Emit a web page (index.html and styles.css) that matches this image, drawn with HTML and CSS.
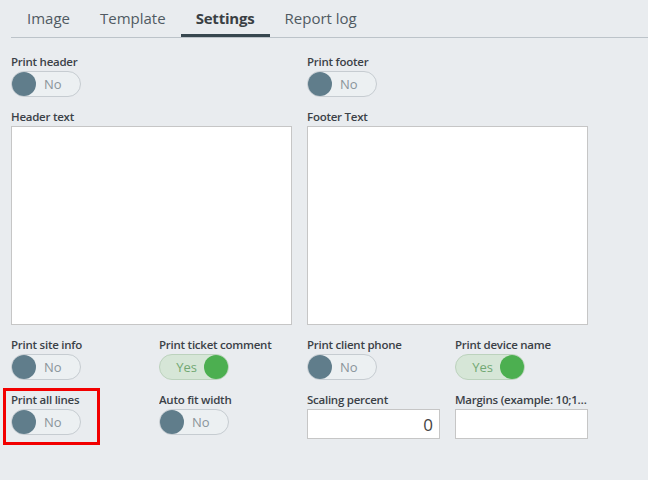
FILE: index.html
```html
<!DOCTYPE html>
<html lang="en">
<head>
    <meta charset="UTF-8">
    <title>Report settings</title>
    <link rel="stylesheet" href="styles.css">
</head>
<body>

    <!-- Tab strip -->
    <div class="tabs">
        <div class="tab">Image</div>
        <div class="tab">Template</div>
        <div class="tab active">Settings</div>
        <div class="tab">Report log</div>
    </div>

    <div class="settings">
        <!-- Row 1 -->
        <div class="field">
            <label>Print header</label>
            <div class="toggle"><span class="knob"></span><span class="state">No</span></div>
        </div>
        <div class="field"></div>
        <div class="field">
            <label>Print footer</label>
            <div class="toggle"><span class="knob"></span><span class="state">No</span></div>
        </div>
        <div class="field"></div>

        <!-- Row 2 -->
        <div class="field wide">
            <label>Header text</label>
            <textarea></textarea>
        </div>
        <div class="field wide">
            <label>Footer Text</label>
            <textarea></textarea>
        </div>

        <!-- Row 3 -->
        <div class="field">
            <label>Print site info</label>
            <div class="toggle"><span class="knob"></span><span class="state">No</span></div>
        </div>
        <div class="field">
            <label>Print ticket comment</label>
            <div class="toggle on"><span class="knob"></span><span class="state">Yes</span></div>
        </div>
        <div class="field">
            <label>Print client phone</label>
            <div class="toggle"><span class="knob"></span><span class="state">No</span></div>
        </div>
        <div class="field">
            <label>Print device name</label>
            <div class="toggle on"><span class="knob"></span><span class="state">Yes</span></div>
        </div>

        <!-- Row 4 -->
        <div class="field marked">
            <label>Print all lines</label>
            <div class="toggle"><span class="knob"></span><span class="state">No</span></div>
        </div>
        <div class="field">
            <label>Auto fit width</label>
            <div class="toggle"><span class="knob"></span><span class="state">No</span></div>
        </div>
        <div class="field">
            <label>Scaling percent</label>
            <input type="text" class="number" value="0">
        </div>
        <div class="field">
            <label>Margins (example: 10;10;10;10)</label>
            <input type="text" value="">
        </div>
    </div>

</body>
</html>
```

FILE: styles.css
```css
*,
*::before {
    margin: 0;
    padding: 0;
    box-sizing: border-box;
}

body {
    background: #e9ecef;
    font-family: "Open Sans", "Noto Sans", sans-serif;
    color: #3b4147;
}

/* Tabs */
.tabs {
    display: flex;
    margin-left: 11px;
    border-bottom: 1px solid #bcc3c9;
}

.tab {
    height: 37px;
    line-height: 37px;
    padding: 0 15px;
    font-size: 15px;
    color: #505a62;
}

.tab:first-child {
    padding-left: 16px;
}

.tab.active {
    font-weight: 700;
    color: #3a3f44;
    letter-spacing: -0.2px;
    box-shadow: inset 0 -3px 0 #37474f;
}

/* Settings grid */
.settings {
    display: grid;
    grid-template-columns: repeat(4, 133px);
    column-gap: 15px;
    row-gap: 12px;
    padding: 16px 11px;
}

.field {
    position: relative;
}

.field.wide {
    grid-column: span 2;
}

.field label {
    display: block;
    font-size: 11.5px;
    font-weight: 600;
    letter-spacing: -0.25px;
    line-height: 16px;
    margin-bottom: 1px;
    color: #3b4147;
    white-space: nowrap;
    overflow: hidden;
    text-overflow: ellipsis;
}

/* red annotation box */
.field.marked::before {
    content: "";
    position: absolute;
    left: -8px;
    top: -4px;
    width: 97px;
    height: 57px;
    border: 3px solid #f20000;
}

/* Toggle switch */
.toggle {
    display: flex;
    align-items: center;
    width: 70px;
    height: 26px;
    border: 1px solid #c6ccd1;
    border-radius: 13px;
    background: #ecf0f2;
}

.knob {
    width: 24px;
    height: 24px;
    border-radius: 50%;
    background: #607d8b;
}

.state {
    margin-left: 8px;
    font-size: 13px;
    color: #8a949a;
}

.toggle.on {
    flex-direction: row-reverse;
    background: #d6e6d7;
    border-color: #bcd2bd;
}

.toggle.on .knob {
    background: #4caf50;
}

.toggle.on .state {
    margin-left: 0;
    margin-right: 7px;
    color: #72a873;
}

/* Text inputs */
textarea {
    display: block;
    width: 100%;
    height: 199px;
    border: 1px solid #c6c6c6;
    background: #fff;
    resize: none;
}

input {
    display: block;
    width: 100%;
    height: 30px;
    border: 1px solid #c6c6c6;
    background: #fff;
    padding: 0 6px;
    font-family: "Open Sans", sans-serif;
    font-size: 17px;
    color: #444;
}

input.number {
    text-align: right;
}
```
